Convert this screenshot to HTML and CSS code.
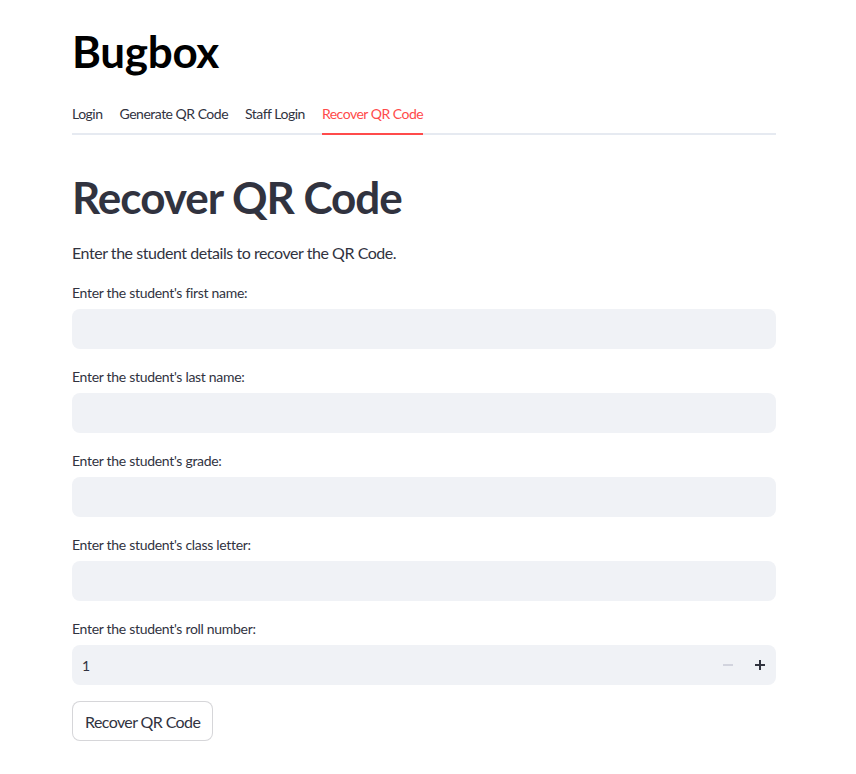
FILE: index.html
```html
<!DOCTYPE html>
<html>
<head>
<meta charset="utf-8">
<link rel="stylesheet" href="styles.css">
</head>
<body>
<main class="page">
  <h1 class="title">Bugbox</h1>
  <nav class="tabs">
    <div class="tab">Login</div>
    <div class="tab">Generate QR Code</div>
    <div class="tab">Staff Login</div>
    <div class="tab active">Recover QR Code</div>
  </nav>
  <section class="panel">
    <h1 class="heading">Recover QR Code</h1>
    <p class="intro">Enter the student details to recover the QR Code.</p>
    <div class="field">
      <label class="label">Enter the student's first name:</label>
      <div class="input"></div>
    </div>
    <div class="field">
      <label class="label">Enter the student's last name:</label>
      <div class="input"></div>
    </div>
    <div class="field">
      <label class="label">Enter the student's grade:</label>
      <div class="input"></div>
    </div>
    <div class="field">
      <label class="label">Enter the student's class letter:</label>
      <div class="input"></div>
    </div>
    <div class="field">
      <label class="label">Enter the student's roll number:</label>
      <div class="input number">
        <span class="value">1</span>
        <div class="steppers">
          <span class="step minus"><svg width="10" height="10" viewBox="0 0 10 10"><rect x="0" y="4" width="10" height="2" fill="currentColor"/></svg></span>
          <span class="step plus"><svg width="10" height="10" viewBox="0 0 10 10"><rect x="0" y="4" width="10" height="2" fill="currentColor"/><rect x="4" y="0" width="2" height="10" fill="currentColor"/></svg></span>
        </div>
      </div>
    </div>
    <div class="actions">
      <button class="button">Recover QR Code</button>
    </div>
  </section>
</main>
</body>
</html>
```
FILE: styles.css
```css
* { box-sizing: border-box; }
html, body { margin: 0; padding: 0; background: #fff; }
body {
  font-family: "Lato", "Noto Sans", sans-serif;
  color: rgb(49, 51, 63);
}
.page {
  width: 704px;
  margin: 0 0 0 72px;
  padding-top: 5px;
}
.title {
  margin: 0;
  padding: 20px 0 16px;
  font-size: 44px;
  line-height: 1.2;
  font-weight: 700;
  color: #000;
  letter-spacing: -0.3px;
}
.tabs {
  display: flex;
  gap: 17px;
  height: 41px;
  border-bottom: 2px solid rgb(230, 234, 241);
}
.tab {
  font-size: 14px;
  letter-spacing: -0.5px;
  color: rgb(49, 51, 63);
  display: flex;
  align-items: center;
  height: 41px;
  padding-top: 1px;
  margin-bottom: -2px;
  border-bottom: 2px solid transparent;
}
.tab.active {
  color: rgb(255, 75, 75);
  border-bottom-color: rgb(255, 75, 75);
}
.panel { display: flex; flex-direction: column; gap: 16px; padding-top: 16px; }
.heading {
  margin: 0;
  padding: 20px 0 0;
  font-size: 44px;
  line-height: 1.2;
  font-weight: 700;
  letter-spacing: -1px;
  color: rgb(49, 51, 63);
}
.intro { margin: 0; font-size: 16px; line-height: 1.6; letter-spacing: -0.45px; }
.field { display: flex; flex-direction: column; }
.label {
  font-size: 14px;
  letter-spacing: -0.3px;
  line-height: 24px;
  height: 24px;
  margin-bottom: 4px;
}
.input {
  height: 40px;
  border-radius: 8px;
  background: rgb(240, 242, 246);
}
.input.number {
  display: flex;
  align-items: center;
  justify-content: space-between;
  padding-left: 10px;
  font-size: 14px;
}
.steppers { display: flex; height: 100%; }
.step { width: 32px; display: flex; align-items: center; justify-content: center; }
.minus { color: rgb(210, 212, 222); }
.plus { color: rgb(49, 51, 63); }
.button {
  font-family: inherit;
  font-size: 16px;
  letter-spacing: -0.6px;
  color: rgb(49, 51, 63);
  background: #fff;
  border: 1px solid rgba(49, 51, 63, 0.2);
  border-radius: 8px;
  height: 40px;
  padding: 4px 12px;
}
```
